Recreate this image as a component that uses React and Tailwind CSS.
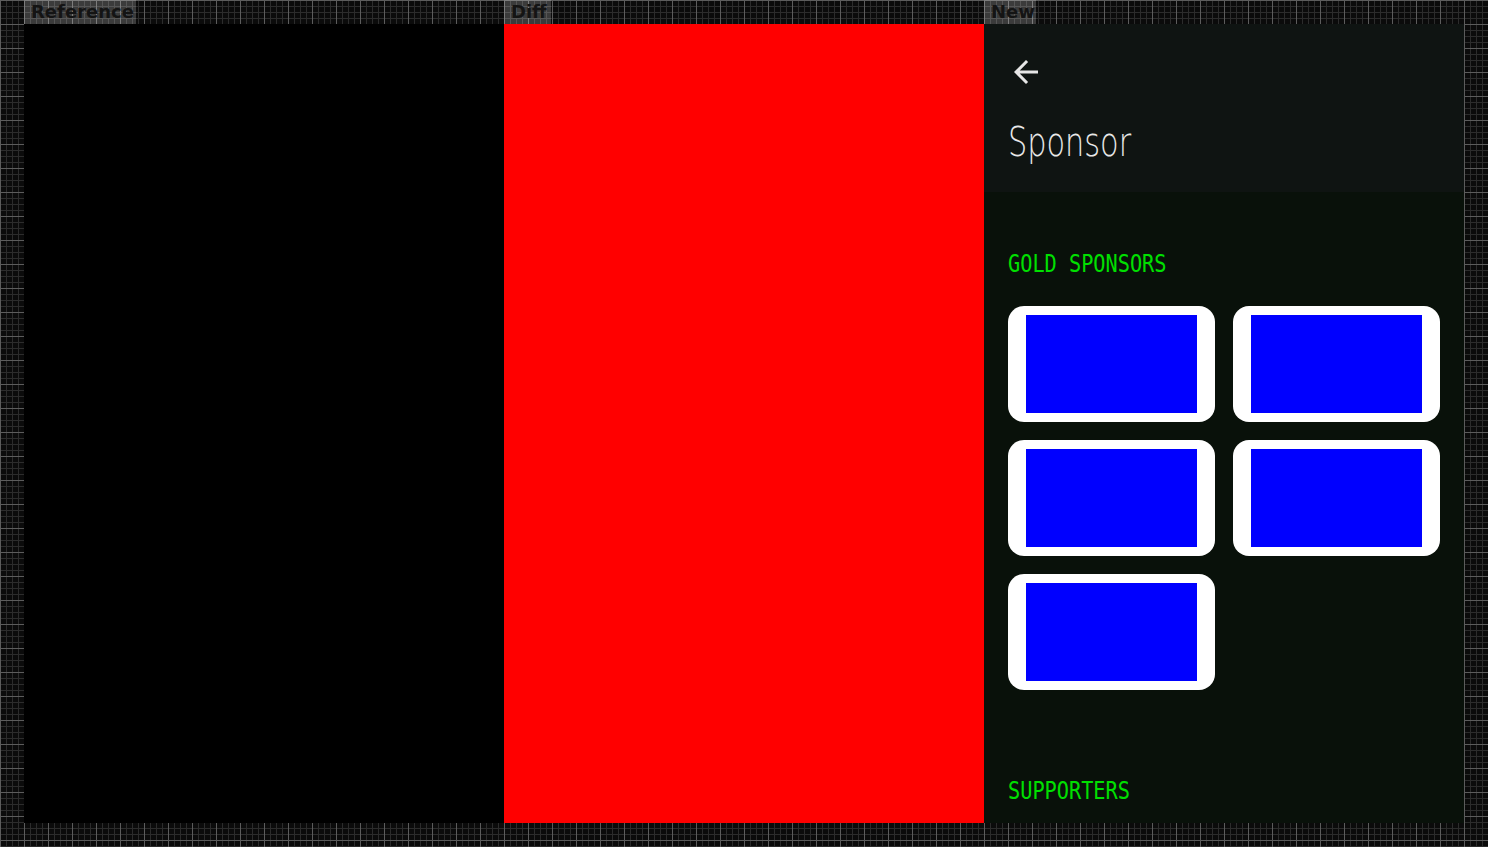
import { Fragment } from 'react';

const gridBg =
  'bg-[#0b0b0b] bg-[linear-gradient(to_right,#5c5c5c_1px,transparent_1px),linear-gradient(to_bottom,#5c5c5c_1px,transparent_1px),linear-gradient(to_right,#2c2c2c_1px,transparent_1px),linear-gradient(to_bottom,#2c2c2c_1px,transparent_1px)] bg-[size:24px_24px,24px_24px,6px_6px,6px_6px]';

function Label({ children, width }) {
  return (
    <div
      className={`h-[24px] ${width} bg-white/20 pl-[7px] text-[18px] leading-[24px] font-bold text-[#141414] font-['DejaVu_Sans',sans-serif]`}
    >
      {children}
    </div>
  );
}

function BackArrow() {
  return (
    <svg viewBox="0 0 24 24" className="w-[36px] h-[36px]" fill="#e6e6e6">
      <path d="M20 11H7.83l5.59-5.59L12 4l-8 8 8 8 1.41-1.41L7.83 13H20v-2z" />
    </svg>
  );
}

function SectionTitle({ children, className = '' }) {
  return (
    <div
      className={`h-[25px] text-[25px] leading-[25px] text-[#00e000] whitespace-nowrap origin-left scale-x-[0.81] font-['DejaVu_Sans_Mono',monospace] ${className}`}
    >
      {children}
    </div>
  );
}

function SponsorCard() {
  return (
    <div className="h-[116px] rounded-2xl bg-white flex items-center justify-center">
      <div className="w-[171px] h-[98px] bg-[#0000ff]" />
    </div>
  );
}

function SponsorScreen() {
  const gold = [1, 2, 3, 4, 5];
  return (
    <div className="w-[480px] h-[799px] overflow-hidden bg-[#09110a] flex flex-col">
      <header className="h-[168px] shrink-0 bg-[#0f1412] pl-[24px] pt-[30px]">
        <BackArrow />
        <h1 className="mt-[32px] h-[41px] text-[41px] leading-[41px] font-extralight text-[#e8e8e8] whitespace-nowrap origin-left scale-x-[0.74] font-['DejaVu_Sans',sans-serif]">
          Sponsor
        </h1>
      </header>
      <section className="px-[24px] pt-[59px]">
        <SectionTitle>GOLD SPONSORS</SectionTitle>
        <div className="mt-[30px] grid grid-cols-2 gap-[18px]">
          {gold.map((g) => (
            <SponsorCard key={g} />
          ))}
        </div>
        <SectionTitle className="mt-[88px]">SUPPORTERS</SectionTitle>
      </section>
    </div>
  );
}

export default function App() {
  const cols = [
    { name: 'Reference', width: 'w-[112px]', panel: <div className="w-[480px] h-[799px] bg-black" /> },
    { name: 'Diff', width: 'w-[47px]', panel: <div className="w-[480px] h-[799px] bg-[#ff0000]" /> },
    { name: 'New', width: 'w-[52px]', panel: <SponsorScreen /> },
  ];
  return (
    <div className={`w-[1488px] h-[847px] overflow-hidden pl-[24px] flex ${gridBg}`}>
      {cols.map((c) => (
        <Fragment key={c.name}>
          <div className="w-[480px] flex flex-col">
            <Label width={c.width}>{c.name}</Label>
            {c.panel}
          </div>
        </Fragment>
      ))}
    </div>
  );
}
